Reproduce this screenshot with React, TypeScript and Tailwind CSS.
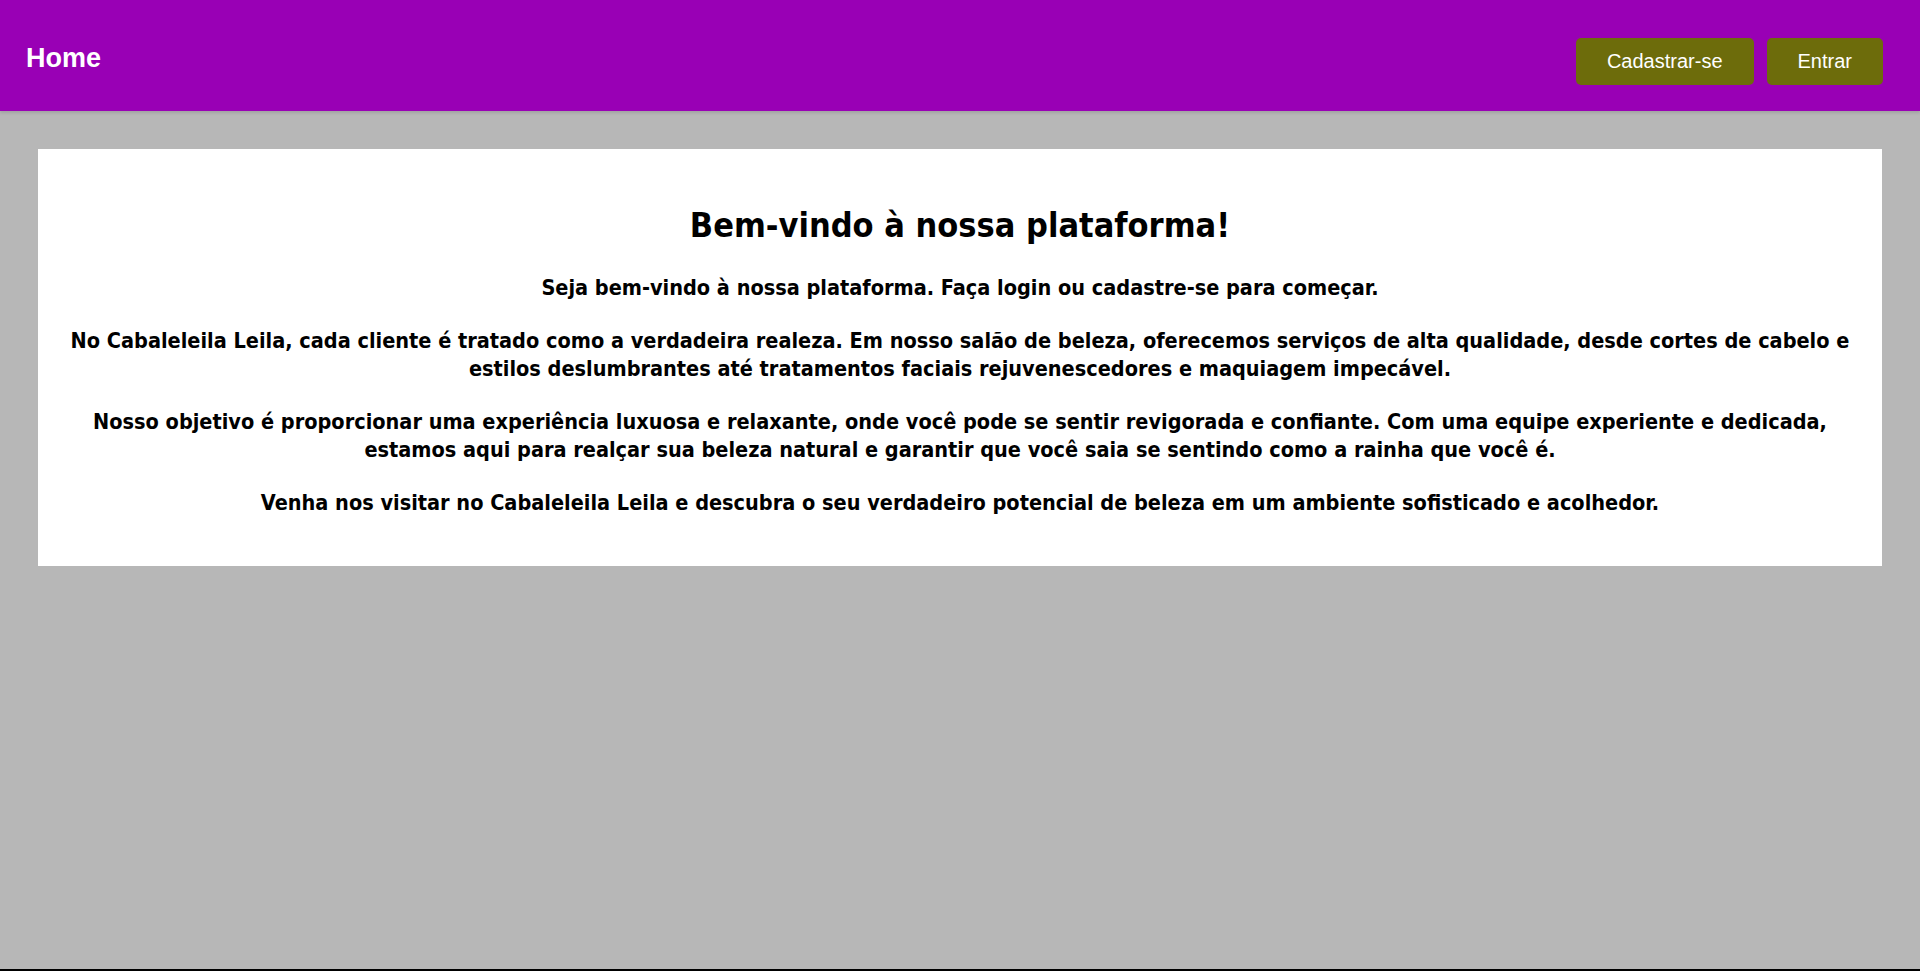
import React from "react";

export default function App() {
  return (
    <div className="min-h-[971px] flex flex-col bg-[#b7b7b7]">
      <header className="h-[111px] shrink-0 flex justify-between items-start bg-[#9900b5] shadow-[0_2px_3px_rgba(0,0,0,0.12)] pl-[26px] pr-[37px]">
        <h1 className="pt-[43px] text-[27px] leading-[31px] font-bold text-white font-['Liberation_Sans',Arial,sans-serif]">
          Home
        </h1>
        <div className="pt-[38px] flex gap-[13px]">
          <button className="h-[47px] px-[31px] rounded-[5px] bg-[#6d6c0b] text-white text-[20px] leading-[23px] font-['Liberation_Sans',Arial,sans-serif]">
            Cadastrar-se
          </button>
          <button className="h-[47px] px-[31px] rounded-[5px] bg-[#6d6c0b] text-white text-[20px] leading-[23px] font-['Liberation_Sans',Arial,sans-serif]">
            Entrar
          </button>
        </div>
      </header>
      <main className="flex-1 p-[38px]">
        <section className="bg-white px-[20px] pt-[57px] pb-[49px] text-center text-black font-bold font-['DejaVu_Sans_Condensed','DejaVu_Sans',sans-serif]">
          <h2 className="text-[34px] leading-[39px] mb-[29px]">Bem-vindo à nossa plataforma!</h2>
          <div className="flex flex-col gap-[25px] text-[21.5px] leading-[28px]">
            <p>Seja bem-vindo à nossa plataforma. Faça login ou cadastre-se para começar.</p>
            <p>
              No Cabaleleila Leila, cada cliente é tratado como a verdadeira realeza. Em nosso salão de beleza, oferecemos
              serviços de alta qualidade, desde cortes de cabelo e estilos deslumbrantes até tratamentos faciais
              rejuvenescedores e maquiagem impecável.
            </p>
            <p>
              Nosso objetivo é proporcionar uma experiência luxuosa e relaxante, onde você pode se sentir revigorada e
              confiante. Com uma equipe experiente e dedicada, estamos aqui para realçar sua beleza natural e garantir que
              você saia se sentindo como a rainha que você é.
            </p>
            <p>
              Venha nos visitar no Cabaleleila Leila e descubra o seu verdadeiro potencial de beleza em um ambiente
              sofisticado e acolhedor.
            </p>
          </div>
        </section>
      </main>
      <div className="h-[2px] shrink-0 bg-black" />
    </div>
  );
}
